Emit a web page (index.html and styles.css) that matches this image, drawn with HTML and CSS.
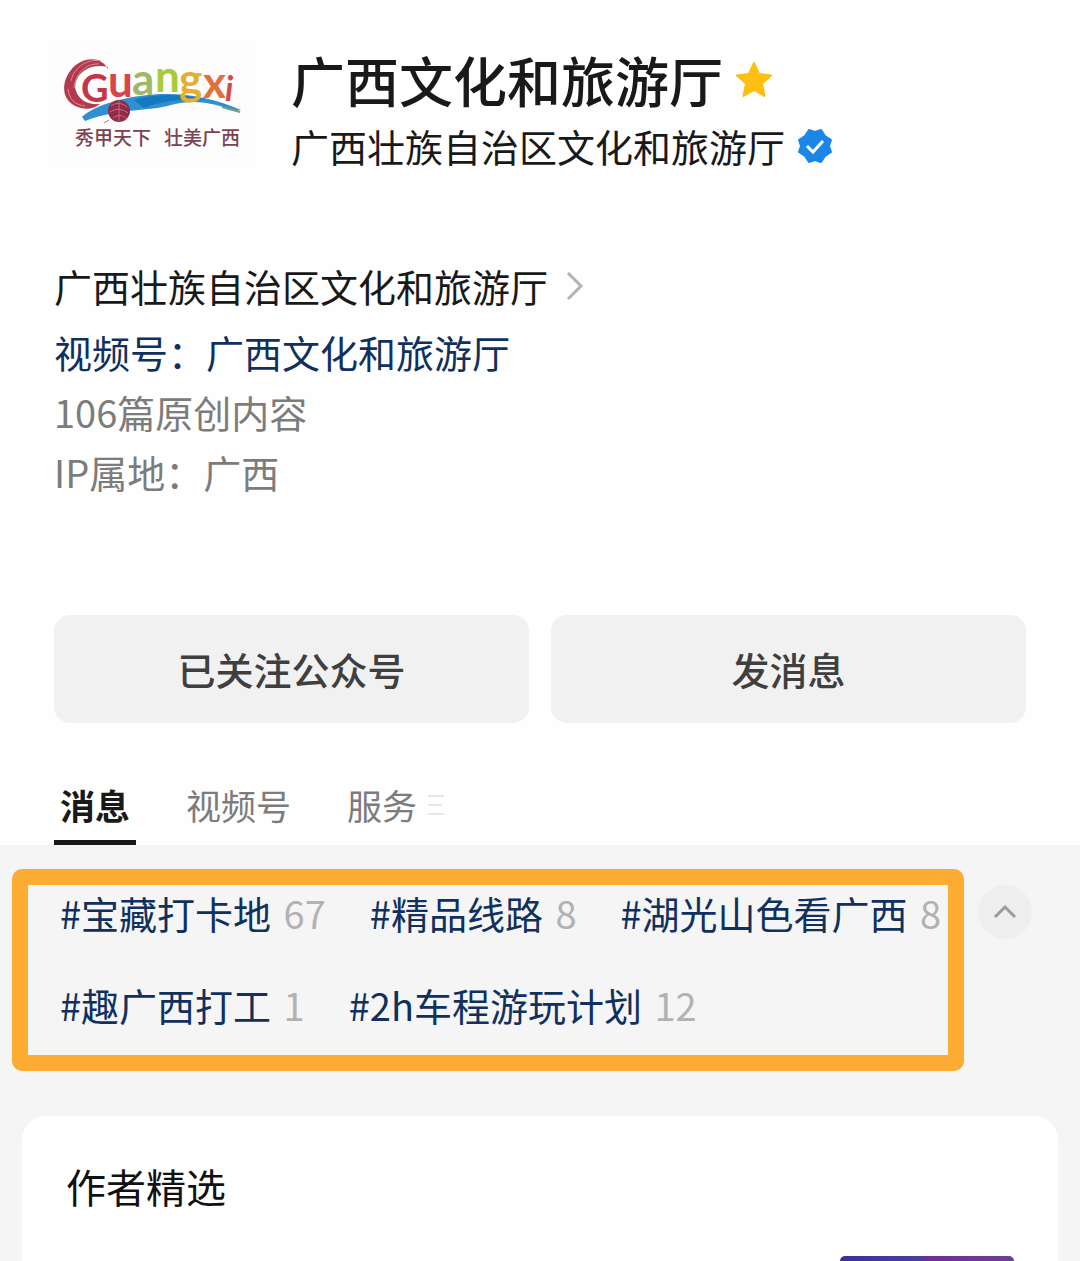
FILE: index.html
```html
<!DOCTYPE html>
<html lang="zh-CN">
<head>
    <meta charset="UTF-8">
    <meta name="viewport" content="width=device-width, initial-scale=1.0">
    <title>广西文化和旅游厅</title>
    <link rel="stylesheet" href="styles.css">
</head>
<body>
    <header class="profile">
        <svg class="avatar" viewBox="0 0 200 124" role="img" aria-label="Guangxi">
            <rect class="avatar-bg" width="200" height="124" rx="6"/>
            <!-- swirl around the G -->
            <path d="M54 25C47 12 28 12 17 26C5 41 9 60 27 64C34 66 41 64 46 60C34 61 25 56 22 47C18 34 32 18 54 23Z" fill="#b23a4c"/>
            <path d="M47 17C34 14 20 23 17 37M45 20C31 19 21 31 20 44M14 45C15 55 21 61 31 62" fill="none" stroke="#dc8a92" stroke-width="1"/>
            <!-- river -->
            <path d="M28 73C42 60 73 52 106 50C134 49 160 54 187 66C180 67 173 64 166 62C148 57 132 57 117 61C94 68 68 63 31 77Z" fill="#2f8fd0"/>
            <path d="M80 56C103 49 130 50 151 56C124 54 106 58 90 64Z" fill="#1579bf"/>
            <path d="M168 63L186 68" stroke="#6fa07e" stroke-width="2"/>
            <text class="logo-word"><tspan class="g" x="27" y="58">G</tspan><tspan class="u" x="54" y="53">u</tspan><tspan class="a" x="78" y="51">a</tspan><tspan class="n" x="101" y="48">n</tspan><tspan class="g2" x="125" y="51">g</tspan><tspan class="x" x="149" y="54">x</tspan><tspan class="i" x="171" y="57">i</tspan></text>
            <!-- embroidered ball -->
            <circle cx="65" cy="67" r="11" fill="#8f2c49"/>
            <path d="M57 62Q65 56 73 63M56 68Q65 62 74 69M59 74Q65 69 72 74M65 57V77M55 76L50 79" fill="none" stroke="#c86b7f" stroke-width="1"/>
            <text class="logo-slogan" y="101"><tspan x="21">秀甲天下</tspan><tspan x="110">壮美广西</tspan></text>
        </svg>
        <div class="profile-names">
            <h1>广西文化和旅游厅
                <svg class="star" viewBox="0 0 38 38" aria-hidden="true"><path d="M19 2L24 13L36 14.500L27 22.500L29.500 35L19 29L8.500 35L11 22.500L2 14.500L14 13Z"/></svg>
            </h1>
            <p class="owner">广西壮族自治区文化和旅游厅
                <svg class="verified" viewBox="0 0 36 36" aria-hidden="true">
                    <path class="seal" d="M18 4L24 2L28 8L34 12L32 18L34 24L28 28L24 34L18 32L12 34L8 28L2 24L4 18L2 12L8 8L12 2Z"/>
                    <path class="tick" d="M10 18L16 24L26 13"/>
                </svg>
            </p>
        </div>
    </header>

    <section class="details">
        <a class="subject" href="#subject">广西壮族自治区文化和旅游厅
            <svg class="arrow" viewBox="0 0 18 30" aria-hidden="true"><path d="M2 2L15 15L2 28"/></svg>
        </a>
        <a class="channel" href="#channel">视频号：广西文化和旅游厅</a>
        <p>106篇原创内容</p>
        <p>IP属地：广西</p>
    </section>

    <div class="actions">
        <button type="button">已关注公众号</button>
        <button type="button">发消息</button>
    </div>

    <nav class="tabs">
        <a class="active" href="#messages">消息</a>
        <a href="#videos">视频号</a>
        <a href="#services">服务
            <svg class="menu-icon" viewBox="0 0 18 22" aria-hidden="true"><path d="M1 2H17M1 11H15M1 20H17"/></svg>
        </a>
    </nav>

    <main class="feed">
        <div class="topics">
            <div class="topic-list">
                <a href="#t1">#宝藏打卡地 <span>67</span></a>
                <a href="#t2">#精品线路 <span>8</span></a>
                <a href="#t3">#湖光山色看广西 <span>8</span></a>
                <a href="#t4">#趣广西打工 <span>1</span></a>
                <a href="#t5">#2h车程游玩计划 <span>12</span></a>
            </div>
            <button class="collapse" type="button" aria-label="收起">
                <svg viewBox="0 0 24 16" aria-hidden="true"><path d="M2 13L12 3L22 13"/></svg>
            </button>
        </div>

        <section class="card">
            <h2>作者精选</h2>
            <div class="cover"></div>
        </section>
    </main>
</body>
</html>
```

FILE: styles.css
```css
* {
    box-sizing: border-box;
}
body {
    margin: 0;
    background-color: #fefefe;
    color: #191919;
    font-family: "Noto Sans CJK SC", sans-serif;
    font-size: 38px;
    line-height: 60px;
}
h1, h2, p {
    margin: 0;
    font-weight: normal;
}
a {
    color: inherit;
    text-decoration: none;
}
button {
    border: none;
    font-family: inherit;
    font-size: inherit;
    cursor: pointer;
}

.profile {
    display: flex;
    gap: 37px;
    padding: 44px 54px 0;
}
.avatar {
    flex: none;
    width: 200px;
    height: 124px;
}
.avatar-bg {
    fill: #fdfdfd;
}
.logo-word {
    font-family: Lato, sans-serif;
    font-size: 44px;
    font-weight: 700;
}
.logo-word .g { fill: #c2384a; font-size: 38px; }
.logo-word .u { fill: #d6454d; }
.logo-word .a { fill: #9fb76a; }
.logo-word .n { fill: #a9cb38; }
.logo-word .g2 { fill: #e3b02f; }
.logo-word .x { fill: #e2703a; }
.logo-word .i { fill: #d44a4a; font-size: 34px; font-style: italic; }
.logo-slogan {
    fill: #7d4150;
    font-size: 19px;
    font-weight: 500;
}
.profile-names h1 {
    display: flex;
    align-items: center;
    gap: 12px;
    font-size: 54px;
    font-weight: 500;
    line-height: 72px;
}
.owner {
    display: flex;
    align-items: center;
    gap: 12px;
}
.star {
    width: 38px;
    height: 38px;
    fill: #fdbf12;
    stroke: #fdbf12;
    stroke-width: 2;
    stroke-linejoin: round;
}
.verified {
    width: 36px;
    height: 36px;
}
.seal {
    fill: #1c86e8;
    stroke: #1c86e8;
    stroke-width: 2;
    stroke-linejoin: round;
}
.tick {
    fill: none;
    stroke: #fff;
    stroke-width: 3;
}

.details {
    display: flex;
    flex-direction: column;
    align-items: flex-start;
    padding: 80px 54px 0;
    color: #7c7c7c;
}
.subject {
    display: flex;
    align-items: center;
    gap: 18px;
    margin-bottom: 6px;
    color: #191919;
}
.channel {
    color: #10305e;
}
.arrow {
    width: 18px;
    height: 30px;
    fill: none;
    stroke: #b4b4b4;
    stroke-width: 3;
}

.actions {
    display: grid;
    grid-template-columns: 1fr 1fr;
    gap: 22px;
    padding: 113px 54px 0;
}
.actions button {
    padding: 24px 0;
    border-radius: 16px;
    background-color: #f1f1f1;
    color: #3f3f3f;
    font-weight: 500;
    line-height: 60px;
}

.tabs {
    display: flex;
    gap: 44px;
    padding: 52px 54px 0;
    color: #7c7c7c;
    font-size: 35px;
}
.tabs a {
    display: flex;
    align-items: center;
    gap: 10px;
    padding: 0 6px 10px;
}
.tabs .active {
    padding-bottom: 5px;
    border-bottom: 5px solid #191919;
    color: #191919;
    font-weight: bold;
}
.menu-icon {
    width: 18px;
    height: 22px;
    stroke: #e6e6e6;
    stroke-width: 2;
}

.feed {
    padding-top: 24px;
    background-color: #f5f5f5;
}
.topics {
    display: flex;
    align-items: flex-start;
    gap: 14px;
    padding: 0 48px 0 12px;
}
.topic-list {
    flex: 1;
    display: flex;
    flex-wrap: wrap;
    gap: 36px 44px;
    padding: 0 0 22px 32px;
    border: 16px solid #fdac33;
    border-radius: 10px;
    color: #10305e;
    line-height: 56px;
}
.topic-list span {
    margin-left: 4px;
    color: #b2b2b2;
}
.collapse {
    display: grid;
    place-items: center;
    width: 54px;
    height: 54px;
    margin-top: 16px;
    padding: 0;
    border-radius: 50%;
    background-color: #eeeeee;
}
.collapse svg {
    width: 24px;
    height: 16px;
    fill: none;
    stroke: #9c9c9c;
    stroke-width: 3;
}

.card {
    margin: 45px 22px 0;
    padding: 40px 44px 0;
    border-radius: 24px 24px 0 0;
    background-color: #fff;
}
.card h2 {
    color: #111;
    font-size: 40px;
}
.cover {
    width: 174px;
    height: 5px;
    margin: 40px 0 0 auto;
    border-radius: 6px 6px 0 0;
    background: linear-gradient(90deg, #3a2f9c, #4a3f9c 45%, #6a2f98 50%, #6a4098);
}
```
